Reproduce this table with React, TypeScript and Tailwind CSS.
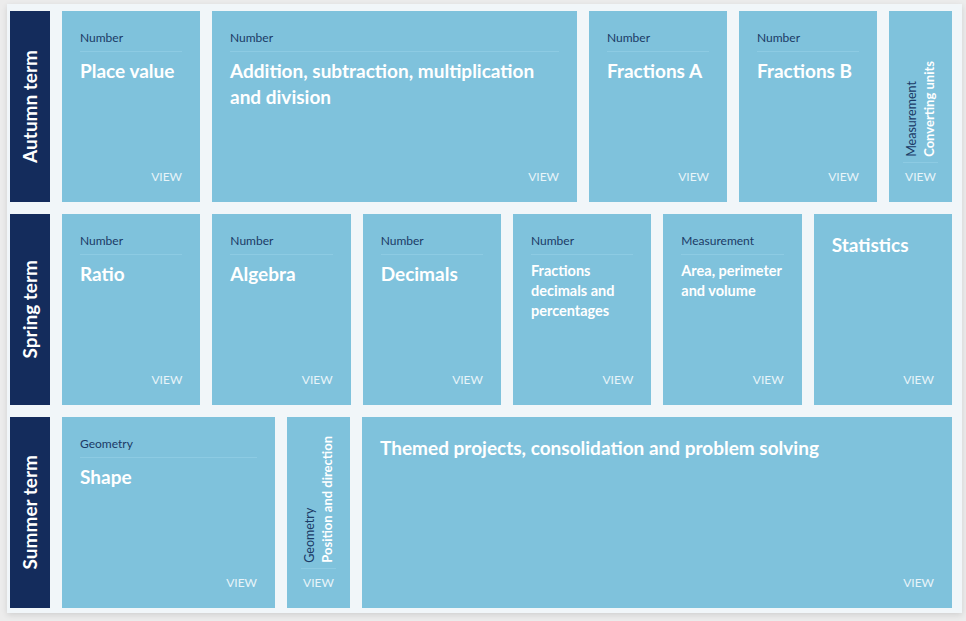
import React from 'react';

type Tile = {
  category?: string;
  title: string;
  width?: string;
  small?: boolean;
  vertical?: boolean;
};

const rows: { term: string; tiles: Tile[] }[] = [
  {
    term: 'Autumn term',
    tiles: [
      { category: 'Number', title: 'Place value', width: 'w-[138px]' },
      { category: 'Number', title: 'Addition, subtraction, multiplication and division', width: 'w-[365px]' },
      { category: 'Number', title: 'Fractions A', width: 'w-[138px]' },
      { category: 'Number', title: 'Fractions B', width: 'w-[138px]' },
      { category: 'Measurement', title: 'Converting units', width: 'w-[63px]', vertical: true },
    ],
  },
  {
    term: 'Spring term',
    tiles: [
      { category: 'Number', title: 'Ratio', width: 'flex-1' },
      { category: 'Number', title: 'Algebra', width: 'flex-1' },
      { category: 'Number', title: 'Decimals', width: 'flex-1' },
      { category: 'Number', title: 'Fractions decimals and percentages', width: 'flex-1', small: true },
      { category: 'Measurement', title: 'Area, perimeter and volume', width: 'flex-1', small: true },
      { title: 'Statistics', width: 'flex-1' },
    ],
  },
  {
    term: 'Summer term',
    tiles: [
      { category: 'Geometry', title: 'Shape', width: 'w-[213px]' },
      { category: 'Geometry', title: 'Position and direction', width: 'w-[63px]', vertical: true },
      { title: 'Themed projects, consolidation and problem solving', width: 'flex-1' },
    ],
  },
];

function VerticalTile({ tile }: { tile: Tile }) {
  return (
    <div className={`${tile.width} shrink-0 bg-[#7fc2dc] flex flex-col pb-[17px]`}>
      <div className="flex-1 flex items-end justify-center">
        <div className="[writing-mode:vertical-rl] rotate-180">
          <span className="block text-[12.5px] leading-[17px] text-[#1b3a66]">{tile.category}</span>
          <span className="block text-[13px] leading-[19px] font-bold text-white">{tile.title}</span>
        </div>
      </div>
      <div className="mx-[14px] mt-[5px] border-t border-[#8dcbe3]" />
      <div className="text-center text-[12px] leading-[16px] text-[#e8f4f9] mt-[6px]">VIEW</div>
    </div>
  );
}

function CardTile({ tile }: { tile: Tile }) {
  if (tile.vertical) return <VerticalTile tile={tile} />;
  return (
    <div
      className={`${tile.width} shrink-0 bg-[#7fc2dc] flex flex-col px-[18px] pb-[17px] ${
        tile.category ? 'pt-[19px]' : 'pt-[18px]'
      }`}
    >
      {tile.category && (
        <div className="text-[12px] leading-[16px] text-[#1b3a66] pb-[5px] border-b border-[#8dcbe3]">
          {tile.category}
        </div>
      )}
      <div
        className={
          tile.small
            ? 'mt-[6px] text-[14.5px] leading-[20px] font-bold text-white'
            : `${tile.category ? 'mt-[6px]' : ''} text-[19px] leading-[26px] font-bold text-white`
        }
      >
        {tile.title}
      </div>
      <div className="mt-auto text-right text-[12px] leading-[16px] text-[#e8f4f9]">VIEW</div>
    </div>
  );
}

export default function App() {
  return (
    <div
      className="w-[966px] h-[621px] bg-[#ececec] pt-[4px] pl-[7px] overflow-hidden"
      style={{ fontFamily: 'Lato, "Open Sans", sans-serif' }}
    >
      <div className="w-[955px] h-[609px] bg-[#f1f6f9] shadow-[0_2px_6px_rgba(0,0,0,0.12)] pl-[3px] pr-[10px] pt-[7px] flex flex-col gap-3">
        {rows.map((row) => (
          <div key={row.term} className="flex gap-3 h-[191px]">
            <div className="w-[40px] shrink-0 bg-[#142c5c] flex items-center justify-center">
              <span className="[writing-mode:vertical-rl] rotate-180 text-white font-bold text-[19px] whitespace-nowrap">
                {row.term}
              </span>
            </div>
            {row.tiles.map((tile) => (
              <CardTile key={tile.title} tile={tile} />
            ))}
          </div>
        ))}
      </div>
    </div>
  );
}
